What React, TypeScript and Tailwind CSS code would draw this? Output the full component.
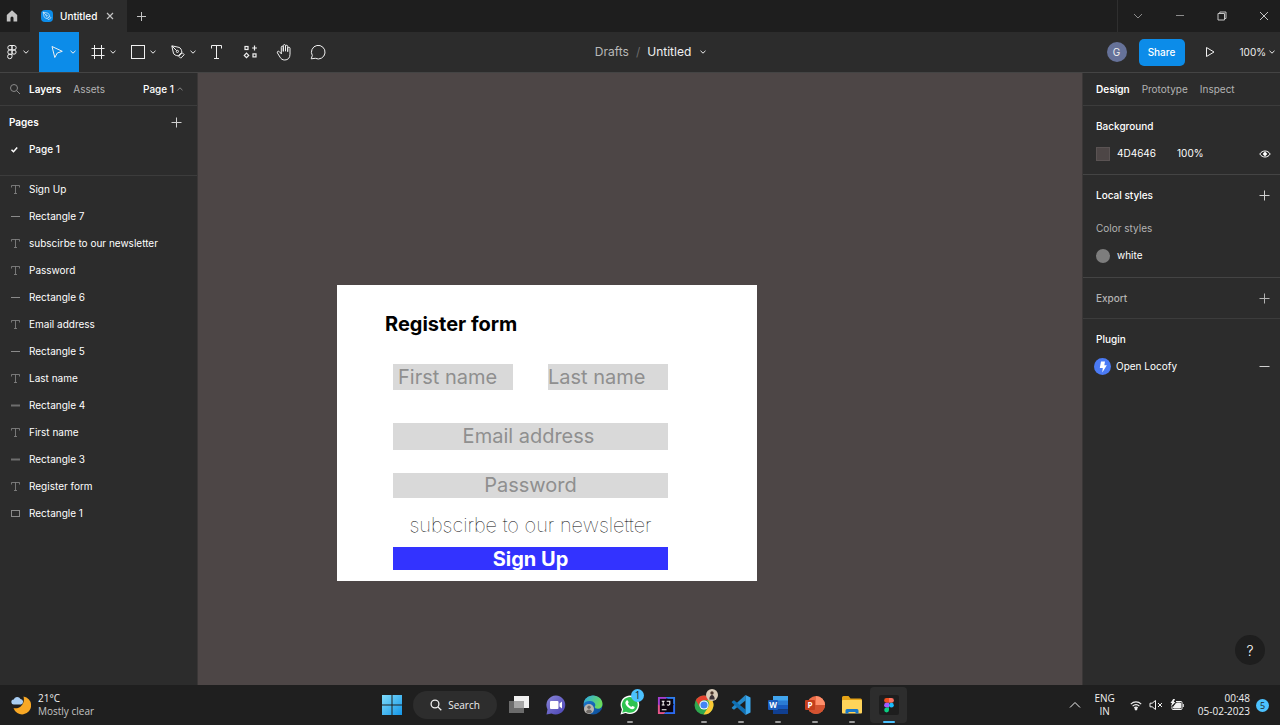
import type { ReactNode } from "react";

type IconProps = { className?: string };

function Chevron({ className = "" }: IconProps) {
  return (
    <svg viewBox="0 0 8 8" className={`size-2 shrink-0 ${className}`} fill="none" stroke="currentColor" strokeWidth="1">
      <path d="M1.5 2.8 4 5.2 6.5 2.8" />
    </svg>
  );
}

function Plus({ className = "" }: IconProps) {
  return (
    <svg viewBox="0 0 12 12" className={`size-3 shrink-0 ${className}`} fill="none" stroke="currentColor">
      <path d="M5.500 .5v10M.5 5.500h10" />
    </svg>
  );
}

function FigmaOutline() {
  return (
    <svg viewBox="0 0 12 16" className="h-4 w-3" fill="none" stroke="currentColor" strokeWidth="1">
      <path d="M6 1.5H4a2.2 2.2 0 0 0 0 4.4h2zM6 1.5h2a2.2 2.2 0 0 1 0 4.4H6zM6 5.9H4a2.2 2.2 0 0 0 0 4.4h2zM6 10.3H4a2.2 2.2 0 1 0 2 2.2z" />
      <circle cx="8" cy="8.1" r="2.1" />
    </svg>
  );
}

function MoveIcon() {
  return (
    <svg viewBox="0 0 16 16" className="size-4" fill="none" stroke="currentColor" strokeLinejoin="round">
      <path d="M2 2.500 12.300 7.300 7.300 9 4.800 13.500z" />
    </svg>
  );
}

function FrameIcon() {
  return (
    <svg viewBox="0 0 16 16" className="size-4" fill="none" stroke="currentColor">
      <path d="M4.5 1v14M11.5 1v14M1.5 4.5h13M1.5 11.5h13" />
    </svg>
  );
}

function RectIcon() {
  return (
    <svg viewBox="0 0 16 16" className="size-4" fill="none" stroke="currentColor">
      <rect x="1.5" y="1.5" width="13" height="13" />
    </svg>
  );
}

function PenIcon({ className = "" }: IconProps) {
  return (
    <svg viewBox="0 0 16 16" className={className} fill="none" stroke="currentColor" strokeLinejoin="round">
      <path d="M1.8 1.8 9 3.4c1.8.5 2.6 2.5 2.9 4.8l-3.7 3.7C5.9 11.6 3.9 10.8 3.4 9zM2 2l4.7 4.7M12.3 8.8l1.9 1.9-3.5 3.5-1.900-1.900z" />
      <circle cx="7.4" cy="7.4" r="1.1" />
    </svg>
  );
}

function TextIcon({ className = "" }: IconProps) {
  return (
    <svg viewBox="0 0 14 16" className={className} fill="none" stroke="currentColor">
      <path d="M2.500 4.500v-3h10v3M7.500 1.500v13M5 14.500h5" />
    </svg>
  );
}

function ComponentsIcon() {
  return (
    <svg viewBox="0 0 16 16" className="size-4" fill="none" stroke="currentColor" strokeWidth="1.2">
      <rect x="3" y="2.5" width="3" height="3" />
      <path d="M12.500 1.600v4.800M10.100 4h4.800M4.500 9.200l2.200 2.200-2.200 2.200-2.200-2.200z" />
      <rect x="11" y="9.900" width="3" height="3" />
    </svg>
  );
}

function HandIcon() {
  return (
    <svg viewBox="0 0 18 18" className="size-[18px]" fill="none" stroke="currentColor" strokeLinecap="round" strokeLinejoin="round">
      <path d="M6.300 10.500V4.200c0-1.400 2-1.400 2 0v4M8.300 7.800V2.700c0-1.500 2.200-1.500 2.200 0v5.100M10.500 7.800V3.300c0-1.400 2.200-1.400 2.200 0v5M12.700 8.300V5.200c0-1.300 2.300-1.300 2.300 0v6c0 3.700-2 5.800-5.200 5.800-2.400 0-3.700-1-4.800-2.900L2.400 9.900c-.7-1.300 1-2.300 2-1.200l1.900 2" />
    </svg>
  );
}

function CommentIcon() {
  return (
    <svg viewBox="0 0 18 18" className="size-[18px]" fill="none" stroke="currentColor" strokeLinejoin="round">
      <path d="M2.200 15.800 3.300 12.500A6.800 6.800 0 1 1 6.300 15.300z" />
    </svg>
  );
}

function Tool({ label, chevron, active, children }: { label: string; chevron?: boolean; active?: boolean; children: ReactNode }) {
  const base = "flex h-10 shrink-0 items-center";
  const size = chevron ? "w-10 gap-[3px] pl-[11px]" : "w-[34px] justify-center";
  return (
    <button type="button" aria-label={label} className={`${base} ${size} ${active ? "bg-[#0c8ce9]" : ""}`}>
      {children}
      {chevron && <Chevron />}
    </button>
  );
}

function TitleBar() {
  return (
    <header className="flex h-8 shrink-0 items-stretch bg-[#1e1e1e] text-[#c4c4c4]">
      <button type="button" aria-label="Home" className="flex w-[30px] items-center pl-1.5">
        <svg viewBox="0 0 12 12" className="size-3" fill="currentColor">
          <path d="M6 .3.8 5v6.5h3.700V8a1.500 1.500 0 0 1 3 0v3.500h3.700V5z" />
        </svg>
      </button>
      <div className="flex w-[97px] items-center bg-[#2c2c2c] pl-[11px]">
        <span className="flex size-3 items-center justify-center rounded-sm bg-[#0c8ce9] text-white">
          <PenIcon className="size-2.5" />
        </span>
        <span className="ml-[7px] text-[10px] font-medium text-white">Untitled</span>
        <button type="button" aria-label="Close tab" className="ml-2">
          <svg viewBox="0 0 10 10" className="size-2.5" fill="none" stroke="currentColor" strokeWidth="1.2">
            <path d="m2 2 6 6M8 2 2 8" />
          </svg>
        </button>
      </div>
      <button type="button" aria-label="New tab" className="flex w-7 items-center justify-center">
        <svg viewBox="0 0 10 10" className="size-2.5" fill="none" stroke="currentColor"><path d="M5.500 1v9M1 5.500h9" /></svg>
      </button>
      <div className="ml-auto flex items-center gap-2.5 border-l border-[#2f2f2f] pl-1">
        <button type="button" aria-label="More tabs" className="flex w-8 justify-center text-[#8c8c8c]">
          <svg viewBox="0 0 10 10" className="size-2.5" fill="none" stroke="currentColor"><path d="m1 3 4 4 4-4" /></svg>
        </button>
        <button type="button" aria-label="Minimize" className="flex w-8 justify-center text-[#8c8c8c]">
          <svg viewBox="0 0 10 10" className="size-2.5" fill="none" stroke="currentColor"><path d="M1 4.500h8" /></svg>
        </button>
        <button type="button" aria-label="Restore" className="flex w-8 justify-center">
          <svg viewBox="0 0 10 10" className="size-2.5" fill="none" stroke="currentColor"><path d="M1 2.500h6.500V9H1zM2.800 2.500v-1.500H9v6.500H7.500" /></svg>
        </button>
        <button type="button" aria-label="Close" className="flex w-8 justify-center">
          <svg viewBox="0 0 10 10" className="size-2.5" fill="none" stroke="currentColor"><path d="m1 1 8 8M9 1 1 9" /></svg>
        </button>
      </div>
    </header>
  );
}

function Toolbar() {
  return (
    <div className="flex h-[41px] shrink-0 items-start border-b border-[#444444] bg-[#2c2c2c] text-[#f0f0f0]">
      <div className="flex flex-1">
        <button type="button" aria-label="Main menu" className="flex h-10 w-[39px] items-center gap-1 pl-1.5">
          <FigmaOutline />
          <Chevron />
        </button>
        <Tool label="Move" chevron active><MoveIcon /></Tool>
        <Tool label="Frame" chevron><FrameIcon /></Tool>
        <Tool label="Rectangle" chevron><RectIcon /></Tool>
        <Tool label="Pen" chevron><PenIcon className="size-4" /></Tool>
        <Tool label="Text"><TextIcon className="h-4 w-3.5" /></Tool>
        <Tool label="Resources"><ComponentsIcon /></Tool>
        <Tool label="Hand"><HandIcon /></Tool>
        <Tool label="Comment"><CommentIcon /></Tool>
      </div>
      <div className="flex h-10 items-center pl-[26px] text-[12px]">
        <span className="text-[#b8b8b8]">Drafts</span>
        <span className="px-[7px] text-[#6b6b6b]">/</span>
        <span>Untitled</span>
        <button type="button" aria-label="File options" className="ml-2"><Chevron /></button>
      </div>
      <div className="flex h-10 flex-1 items-center justify-end pr-1 text-[10px]">
        <span className="flex size-5 items-center justify-center rounded-full bg-[#667299]">G</span>
        <button type="button" className="ml-3 h-[27px] w-[46px] rounded-[5px] bg-[#0c8ce9] font-medium text-white">Share</button>
        <button type="button" aria-label="Present" className="ml-[19px]">
          <svg viewBox="0 0 12 12" className="size-3" fill="none" stroke="currentColor" strokeLinejoin="round"><path d="M2.5 1.5v9L10 6z" /></svg>
        </button>
        <button type="button" className="ml-6 flex items-center gap-0.5">100%<Chevron /></button>
      </div>
    </div>
  );
}

type LayerKind = "text" | "line" | "bar" | "rect";

const layers: { name: string; kind: LayerKind }[] = [
  { name: "Sign Up", kind: "text" },
  { name: "Rectangle 7", kind: "line" },
  { name: "subscirbe to our newsletter", kind: "text" },
  { name: "Password", kind: "text" },
  { name: "Rectangle 6", kind: "line" },
  { name: "Email address", kind: "text" },
  { name: "Rectangle 5", kind: "line" },
  { name: "Last name", kind: "text" },
  { name: "Rectangle 4", kind: "bar" },
  { name: "First name", kind: "text" },
  { name: "Rectangle 3", kind: "bar" },
  { name: "Register form", kind: "text" },
  { name: "Rectangle 1", kind: "rect" },
];

function LayerIcon({ kind }: { kind: LayerKind }) {
  return (
    <svg viewBox="0 0 10 10" className="size-2.5 shrink-0 text-[#8a8a8a]" fill="none" stroke="currentColor">
      {kind === "text" && <path d="M1.500 2.500v-2h8v2M5.500.5v8M4 8.500h3" strokeWidth="0.8" />}
      {kind === "line" && <path d="M1 4.500h9" />}
      {kind === "bar" && <path d="M1 4.500h9" strokeWidth="2" strokeOpacity="0.7" />}
      {kind === "rect" && <rect x="1.500" y="1.500" width="8" height="6" />}
    </svg>
  );
}

function LeftPanel() {
  return (
    <aside className="flex w-[198px] shrink-0 flex-col border-r border-[#3a3737] bg-[#2c2c2c] text-[10px] text-white">
      <div className="flex h-[33px] items-center border-b border-[#3c3c3c] px-[9px]">
        <svg viewBox="0 0 12 12" className="size-3 text-[#8a8a8a]" fill="none" stroke="currentColor"><circle cx="5" cy="5" r="3.5" /><path d="m7.6 7.6 3.4 3.4" /></svg>
        <button type="button" className="ml-2 font-semibold">Layers</button>
        <button type="button" className="ml-3 text-[#b3b3b3]">Assets</button>
        <button type="button" className="ml-auto flex items-center gap-0.5 pr-1 font-medium">
          Page 1<Chevron className="rotate-180 text-[#8a8a8a]" />
        </button>
      </div>
      <div className="flex h-[70px] flex-col border-b border-[#3c3c3c] pt-[3px]">
        <div className="flex h-[27px] items-center justify-between pr-3.5 pl-[9px]">
          <h2 className="font-semibold">Pages</h2>
          <button type="button" aria-label="Add page" className="text-[#d0d0d0]"><Plus /></button>
        </div>
        <button type="button" className="flex h-[27px] items-center gap-2.5 pl-2.5 font-medium">
          <svg viewBox="0 0 9 9" className="size-[9px]" fill="none" stroke="currentColor" strokeWidth="1.5"><path d="m1.5 4.7 2 2 3.7-4.2" /></svg>
          Page 1
        </button>
      </div>
      <ul>
        {layers.map((layer) => (
          <li key={layer.name} className="flex h-[27px] items-center gap-[9px] pl-2.5">
            <LayerIcon kind={layer.kind} />
            {layer.name}
          </li>
        ))}
      </ul>
    </aside>
  );
}

const field = "block min-w-0 rounded-none bg-[#d9d9d9] p-0 text-[20px] font-normal text-[#8f8f8f] outline-none placeholder:text-[#8f8f8f] placeholder:opacity-100";

function Canvas() {
  return (
    <main className="relative min-w-0 flex-1 overflow-hidden bg-[#4d4646]">
      <form className="absolute top-[212px] left-[139px] flex w-[420px] flex-col bg-white pt-[27px] pb-[11px] pl-14 text-[20px] leading-6">
        <h1 className="-ml-2 font-bold text-black">Register form</h1>
        <div className="mt-7 flex w-[275px] justify-between">
          <input aria-label="First name" placeholder="First name" className={`${field} h-[26px] w-[120px] pl-[5px]`} />
          <input aria-label="Last name" placeholder="Last name" className={`${field} h-[26px] w-[120px]`} />
        </div>
        <input type="email" aria-label="Email address" placeholder="Email address" className={`${field} mt-[33px] h-[27px] w-[275px] pr-1 pb-0.5 text-center`} />
        <input type="password" aria-label="Password" placeholder="Password" className={`${field} mt-[23px] h-[25px] w-[275px] pb-0.5 text-center`} />
        <p className="mt-[15px] w-[275px] text-center font-thin whitespace-nowrap text-black">subscirbe to our newsletter</p>
        <button type="button" className="mt-2.5 h-[23px] w-[275px] overflow-hidden bg-[#3333ff] font-bold text-white">Sign Up</button>
      </form>
    </main>
  );
}

function RightPanel() {
  const row = "flex h-[27px] items-center";
  return (
    <aside className="flex w-[198px] shrink-0 flex-col border-l border-[#3a3737] bg-[#2c2c2c] text-[10px] text-white">
      <div className="flex h-[33px] items-center gap-3 border-b border-[#3c3c3c] pl-[13px] text-[#b3b3b3]">
        <button type="button" className="font-semibold text-white">Design</button>
        <button type="button">Prototype</button>
        <button type="button">Inspect</button>
      </div>
      <section className="border-b border-[#444444] py-[7px] pr-[9px] pl-[13px]">
        <h2 className={`${row} font-medium`}>Background</h2>
        <div className={row}>
          <span className="size-[14px] border border-[#5a5353] bg-[#4d4646]" />
          <span className="w-[61px] pl-[7px]">4D4646</span>
          <span className="pl-[6px]">100%</span>
          <button type="button" aria-label="Toggle visibility" className="ml-auto">
            <svg viewBox="0 0 12 12" className="size-3" fill="none" stroke="currentColor"><path d="M.8 6C3.2 2 8.8 2 11.2 6 8.8 10 3.2 10 .8 6z" /><circle cx="6" cy="6" r="1.4" fill="currentColor" /></svg>
          </button>
        </div>
      </section>
      <section className="border-b border-[#444444] pt-[7px] pr-[9px] pb-2 pl-[13px]">
        <div className={`${row} justify-between`}>
          <h2 className="font-medium">Local styles</h2>
          <button type="button" aria-label="Add style" className="text-[#d0d0d0]"><Plus /></button>
        </div>
        <h3 className={`${row} mt-1.5 text-[#b3b3b3]`}>Color styles</h3>
        <div className={`${row} gap-[7px]`}>
          <span className="size-[14px] rounded-full bg-[#7d7d7d]" />
          white
        </div>
      </section>
      <section className="border-b border-[#3c3c3c] pt-[7px] pr-[9px] pb-1.5 pl-[13px]">
        <div className={`${row} justify-between text-[#b3b3b3]`}>
          <h2 className="font-medium">Export</h2>
          <button type="button" aria-label="Add export"><Plus /></button>
        </div>
      </section>
      <section className="pt-[7px] pr-[9px] pl-[13px]">
        <h2 className={`${row} font-medium`}>Plugin</h2>
        <div className={row}>
          <span className="-ml-0.5 flex size-[17px] items-center justify-center rounded-full bg-[#4b7bf5]">
            <svg viewBox="0 0 12 12" className="size-3" fill="white"><path d="M4 .5h4L7.3 4.3h2.5L5.3 11.5 5.800 7H2.800z" /></svg>
          </span>
          <span className="ml-[5px]">Open Locofy</span>
          <button type="button" aria-label="Remove plugin" className="ml-auto">
            <svg viewBox="0 0 12 12" className="size-3 text-[#d0d0d0]" fill="none" stroke="currentColor"><path d="M.5 5.500h10" /></svg>
          </button>
        </div>
      </section>
      <div className="mt-auto flex justify-end pr-[15px] pb-5">
        <button type="button" aria-label="Help" className="size-[30px] rounded-full bg-[#1e1e1e] text-[14px] font-light">?</button>
      </div>
    </aside>
  );
}

function TaskIcon({ label, running, active, children }: { label: string; running?: boolean; active?: boolean; children: ReactNode }) {
  return (
    <button type="button" aria-label={label} className={`relative flex h-9 w-[37px] items-center justify-center ${active ? "rounded-sm bg-[#2d2d2d]" : ""}`}>
      {children}
      {running && <span className="absolute bottom-0 h-0.5 w-1.5 rounded-full bg-[#9a9a9a]" />}
      {active && <span className="absolute bottom-0 h-0.5 w-3 rounded-full bg-[#4cc2ff]" />}
    </button>
  );
}

function WindowsLogo() {
  return (
    <svg viewBox="0 0 20 20" className="size-5">
      <defs><linearGradient id="win" x1="0" y1="0" x2="1" y2="1"><stop offset="0" stopColor="#7fdcfb" /><stop offset="1" stopColor="#1496e8" /></linearGradient></defs>
      <path fill="url(#win)" d="M0 0h9.5v9.5H0zM10.5 0H20v9.5h-9.500zM0 10.5h9.500V20H0zM10.500 10.500H20V20h-9.500z" />
    </svg>
  );
}

function TaskViewLogo() {
  return (
    <svg viewBox="0 0 20 20" className="size-5">
      <rect x="5" y="1" width="15" height="12" fill="#f0f0f0" />
      <rect x="0" y="6" width="15" height="12" fill="#6b6b6b" />
      <rect x="5" y="6" width="10" height="7" fill="#a5a5a5" />
    </svg>
  );
}

function ChatLogo() {
  return (
    <svg viewBox="0 0 20 20" className="size-5">
      <defs><linearGradient id="chat" x1="0" y1="0" x2="1" y2="1"><stop offset="0" stopColor="#8a86d8" /><stop offset="1" stopColor="#4a43b5" /></linearGradient></defs>
      <path fill="url(#chat)" d="M10 .5a9.500 9.500 0 1 1-4.500 18l-5 1 1-5A9.500 9.500 0 0 1 10 .5z" />
      <rect x="4" y="6" width="8.5" height="8" rx="1" fill="white" />
      <path d="M13.500 8.500 16 6.500v7l-2.500-2z" fill="white" />
    </svg>
  );
}

function EdgeLogo() {
  return (
    <svg viewBox="0 0 20 20" className="size-5">
      <defs>
        <linearGradient id="edge-a" x1="0" y1="0" x2="1" y2="0.4"><stop offset="0" stopColor="#2ba8e8" /><stop offset="1" stopColor="#6bdc5c" /></linearGradient>
        <linearGradient id="edge-b" x1="0" y1="0" x2="1" y2="1"><stop offset="0" stopColor="#1d7fd8" /><stop offset="1" stopColor="#0c4a94" /></linearGradient>
      </defs>
      <circle cx="10" cy="10" r="9.5" fill="url(#edge-b)" />
      <path d="M.6 9C1 4 5 .5 10 .5c5.500 0 9.500 4 9.500 8.500 0 3-2 4.800-4.500 4.800-2.300 0-3.300-.9-3.300-1.700 0-.6.600-.9.600-2.100C12.300 7.500 9.500 6 6.500 6 3.600 6 1.500 7.300.6 9z" fill="url(#edge-a)" />
      <circle cx="6" cy="14" r="5" fill="#b9b5b0" />
      <circle cx="6" cy="12.3" r="1.7" fill="#6f6a66" />
      <path d="M3 17c.3-3.500 5.700-3.500 6 0-1.500 1.700-4.500 1.700-6 0z" fill="#6f6a66" />
    </svg>
  );
}

function WhatsAppLogo() {
  return (
    <svg viewBox="0 0 20 20" className="size-5">
      <path d="m.5 19.500 1.400-5A9.300 9.300 0 1 1 5.600 18z" fill="white" />
      <path d="m2.200 17.800 1-3.600A7.900 7.900 0 1 1 6 16.800z" fill="#2fc351" />
      <path d="M6.500 5.500c.7-.7 1.300-.3 1.600.5l.5 1.200c.2.600-.8 1.200-.6 1.600.7 1.400 1.700 2.300 3.100 2.900.5.200 1-1 1.500-.8l1.700.8c.6.300.4 1.200-.1 1.700-1.200 1.200-2.900.9-4.700-.1-2-1.100-3.400-2.700-4-4.500-.4-1.300.2-2.600 1-3.300z" fill="white" />
    </svg>
  );
}

function IntelliJLogo() {
  return (
    <svg viewBox="0 0 20 20" className="size-[19px]">
      <path d="M1 1h10l-6 9-4 7z" fill="#a43fd0" />
      <path d="M9 1h10v9z" fill="#2f7ef0" />
      <path d="M1 9l9 5-2 5H1z" fill="#e8568a" />
      <path d="M7 19 19 8v11z" fill="#2c6bf2" />
      <rect x="3" y="3" width="14" height="14" fill="#0b0510" />
      <path d="M5 5.500h3M6.500 5.500v4M5 9.500h3M10.200 5.500h3.300v3c0 1.100-1.700 1.500-3 .6M5 14.500h5" stroke="white" strokeWidth="1.1" fill="none" />
    </svg>
  );
}

function ChromeLogo() {
  return (
    <svg viewBox="0 0 20 20" className="size-5">
      <circle cx="10" cy="10" r="9.5" fill="#2fa84f" />
      <path d="M1.800 5.200A9.500 9.500 0 0 1 18.200 5.300H10a4.700 4.700 0 0 0-4.100 7z" fill="#e5422f" />
      <path d="M18.200 5.300A9.500 9.500 0 0 1 9.500 19.500L14 12.400a4.700 4.700 0 0 0-.8-7.100z" fill="#fcc934" />
      <circle cx="10" cy="10" r="4.6" fill="white" />
      <circle cx="10" cy="10" r="3.6" fill="#4285f4" />
    </svg>
  );
}

function CodeLogo() {
  return (
    <svg viewBox="0 0 20 20" className="size-5">
      <path d="M14.500 0v5.500L3 14.800l-2.200-1.600v-.8z" fill="#2489ca" />
      <path d="M.8 6.800 3 5.200l11.500 9.300V20L.8 7.600z" fill="#1070b3" />
      <path d="M14.500 0 19.500 2.400v15.200L14.500 20z" fill="#3ba9f0" />
    </svg>
  );
}

function WordLogo() {
  return (
    <svg viewBox="0 0 20 20" className="size-5">
      <rect x="5" y="1" width="15" height="5" fill="#41a5ee" />
      <rect x="5" y="5.5" width="15" height="4.5" fill="#2b7cd3" />
      <rect x="5" y="10" width="15" height="4.5" fill="#185abd" />
      <rect x="5" y="14.5" width="15" height="4.5" fill="#103f91" />
      <rect x="0" y="5" width="10" height="10" rx="1" fill="#1b5cbe" />
      <text x="5" y="12.7" fontSize="8" fontWeight="700" textAnchor="middle" fill="white">W</text>
    </svg>
  );
}

function PowerPointLogo() {
  return (
    <svg viewBox="0 0 20 20" className="size-5">
      <circle cx="11" cy="10" r="9" fill="#ed6c47" />
      <path d="M11 1a9 9 0 0 1 9 9h-9z" fill="#ff8f6b" />
      <path d="M2 10h18a9 9 0 0 1-18 0z" fill="#d35230" />
      <rect x="0" y="5" width="10" height="10" rx="1" fill="#c43e1c" />
      <text x="5" y="12.8" fontSize="8" fontWeight="700" textAnchor="middle" fill="white">P</text>
    </svg>
  );
}

function FolderLogo() {
  return (
    <svg viewBox="0 0 20 20" className="size-5">
      <path d="M0 2.500Q0 1 1.500 1h5l2 2.500H18.500Q20 3.500 20 5v3H0z" fill="#e6a417" />
      <rect x="0" y="5" width="20" height="13.5" rx="1" fill="#ffd45a" />
      <path d="M3.500 18.500V15.500Q3.500 14 5 14h10q1.500 0 1.500 1.500v3h-3v-1.500h-7v1.500z" fill="#1877c9" />
    </svg>
  );
}

function FigmaLogo() {
  return (
    <svg viewBox="0 0 20 20" className="size-5">
      <rect width="20" height="20" rx="2" fill="#1e1e1e" />
      <path d="M10 3H7.500a2.400 2.400 0 0 0 0 4.800H10z" fill="#f24e1e" />
      <path d="M10 3h2.500a2.400 2.400 0 0 1 0 4.800H10z" fill="#ff7262" />
      <path d="M10 7.800H7.500a2.400 2.400 0 0 0 0 4.800H10z" fill="#a259ff" />
      <circle cx="12.4" cy="10.2" r="2.4" fill="#1abcfe" />
      <path d="M10 12.600H7.500a2.400 2.400 0 1 0 2.500 2.400z" fill="#0acf83" />
    </svg>
  );
}

function Taskbar() {
  return (
    <footer className="grid h-10 shrink-0 grid-cols-[1fr_auto_1fr] items-center bg-[#1f1f1f] font-['Open_Sans','Noto_Sans',sans-serif] text-[10px] text-[#f0f0f0]">
      <button type="button" className="flex items-center gap-[7px] pl-[11px] text-left leading-[13px]">
        <svg viewBox="0 0 20 20" className="size-5">
          <path d="M12.500 1.500A9 9 0 1 1 2.500 13c6 1.500 12-4 10-11.500z" fill="#f9a825" />
          <path d="M3 9.500a2.500 2.500 0 0 1-.3-5A3.700 3.700 0 0 1 9.500 4a2.800 2.800 0 0 1 .5 5.500z" fill="#a9cdf2" />
        </svg>
        <span>
          <span className="block">21°C</span>
          <span className="block text-[#c4c4c4]">Mostly clear</span>
        </span>
      </button>
      <nav aria-label="Taskbar" className="flex items-center">
        <TaskIcon label="Start"><WindowsLogo /></TaskIcon>
        <button type="button" className="mx-[3px] flex h-7 w-[84px] items-center justify-center gap-1.5 rounded-full bg-[#2d2d2d]">
          <svg viewBox="0 0 12 12" className="size-3" fill="none" stroke="currentColor" strokeWidth="1.3"><circle cx="5" cy="5" r="3.9" /><path d="m7.900 7.900 3.400 3.400" /></svg>
          Search
        </button>
        <TaskIcon label="Task view"><TaskViewLogo /></TaskIcon>
        <TaskIcon label="Chat"><ChatLogo /></TaskIcon>
        <TaskIcon label="Edge"><EdgeLogo /></TaskIcon>
        <TaskIcon label="WhatsApp" running>
          <WhatsAppLogo />
          <span className="absolute top-0.5 right-1 flex size-[13px] items-center justify-center rounded-full bg-[#4cc2ff] text-[10px] text-[#1f1f1f]">1</span>
        </TaskIcon>
        <TaskIcon label="IntelliJ IDEA"><IntelliJLogo /></TaskIcon>
        <TaskIcon label="Chrome" running>
          <ChromeLogo />
          <svg viewBox="0 0 12 12" className="absolute top-0.5 right-1 size-3"><circle cx="6" cy="6" r="6" fill="#d9cbb8" /><circle cx="6" cy="4" r="1.7" fill="#4a342a" /><path d="M3.300 10.500c0-6 5.400-6 5.400 0z" fill="#3a3035" /></svg>
        </TaskIcon>
        <TaskIcon label="Visual Studio Code" running><CodeLogo /></TaskIcon>
        <TaskIcon label="Word" running><WordLogo /></TaskIcon>
        <TaskIcon label="PowerPoint" running><PowerPointLogo /></TaskIcon>
        <TaskIcon label="File Explorer" running><FolderLogo /></TaskIcon>
        <TaskIcon label="Figma" active><FigmaLogo /></TaskIcon>
      </nav>
      <div className="flex items-center justify-end pr-[11px] leading-[13px]">
        <button type="button" aria-label="Hidden icons">
          <svg viewBox="0 0 12 12" className="size-3" fill="none" stroke="currentColor"><path d="m1 8.500 5-5 5 5" /></svg>
        </button>
        <button type="button" className="ml-[13px] text-center">ENG<br />IN</button>
        <button type="button" aria-label="Network, sound and battery" className="ml-[15px] flex items-center gap-[7px]">
          <svg viewBox="0 0 12 12" className="size-3" fill="none" stroke="currentColor" strokeWidth="1.2"><path d="M.8 5.200c3-3 7.400-3 10.400 0M2.600 7.200c2-2 4.800-2 6.800 0M4.300 9c1-1 2.400-1 3.400 0" /><circle cx="6" cy="10" r="0.8" fill="currentColor" /></svg>
          <svg viewBox="0 0 14 12" className="h-3 w-3.5" fill="none" stroke="currentColor"><path d="M1 4.200h2.200L6.500 1.500v9L3.200 7.800H1zM9 4l4 4M13 4 9 8" /></svg>
          <svg viewBox="0 0 14 12" className="h-3 w-3.5" fill="none" stroke="currentColor"><path d="M6 2.500h5q1 0 1 1v6q0 1-1 1H3q-1 0-1-1V7.500M13.300 5v3" /><path d="M6.500 4H10.500v5H3.500V8z" fill="currentColor" /><path d="M3.200 0 .5 4H2L1 7.500 5.500 3H3.800L5 0z" fill="currentColor" stroke="none" /></svg>
        </button>
        <button type="button" className="ml-3.5 text-right">00:48<br />05-02-2023</button>
        <span className="ml-1.5 flex size-[13px] items-center justify-center rounded-full bg-[#4cc2ff] text-[9px] text-[#1f1f1f]">5</span>
      </div>
    </footer>
  );
}

export default function App() {
  return (
    <div className="flex min-h-screen flex-col bg-[#2c2c2c] font-['Inter',sans-serif]">
      <TitleBar />
      <Toolbar />
      <div className="flex flex-1">
        <LeftPanel />
        <Canvas />
        <RightPanel />
      </div>
      <Taskbar />
    </div>
  );
}
